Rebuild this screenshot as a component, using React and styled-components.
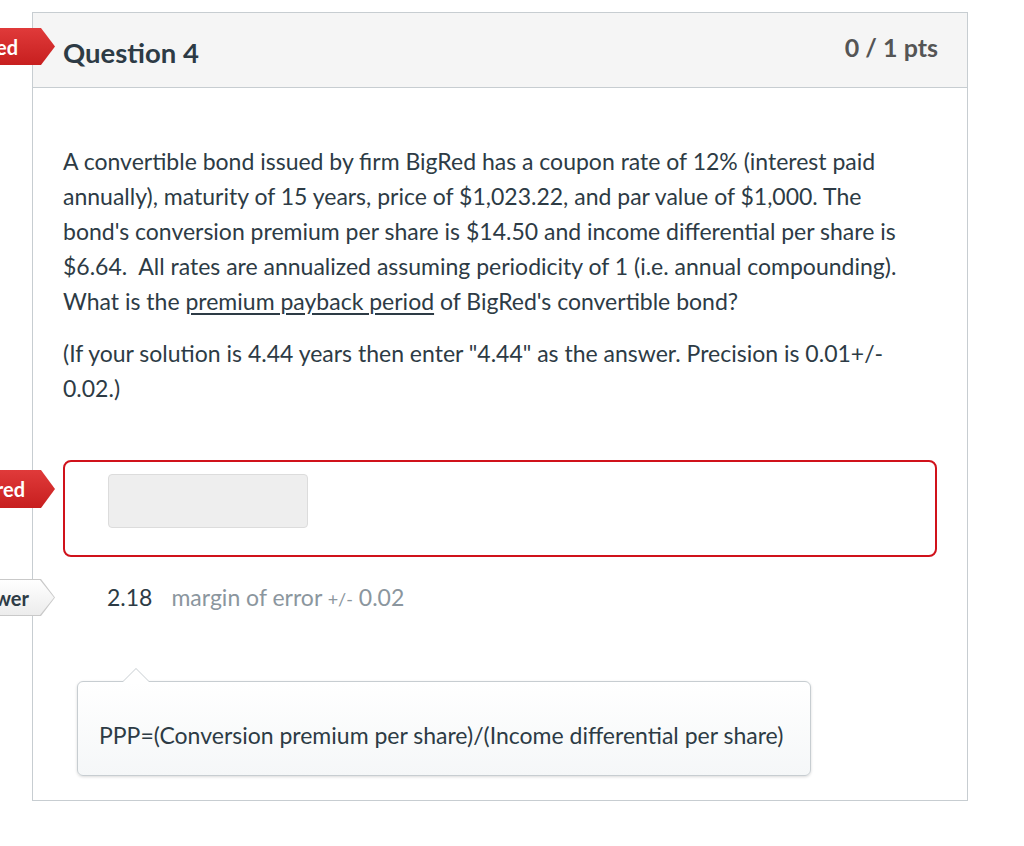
import styled, { createGlobalStyle } from "styled-components"

const GlobalStyle = createGlobalStyle`
  body {
    margin: 0;
    background: #fff;
    font-family: Lato, "Open Sans", sans-serif;
    color: #2d3b45;
  }
`

const Page = styled.div`
  position: relative;
  padding: 12px 0 40px 32px;
`

const Card = styled.div`
  width: 934px;
  border: 1px solid #c7cdd1;
  background: #fff;
`

const Header = styled.div`
  display: flex;
  justify-content: space-between;
  align-items: center;
  height: 74px;
  padding: 0 29px 0 30px;
  background: #f5f5f5;
  border-bottom: 1px solid #c7cdd1;
`

const Title = styled.h2`
  margin: 5px 0 0;
  font-size: 27.5px;
  font-weight: 700;
  color: #2d3b45;
`

const Points = styled.div`
  font-size: 25px;
  font-weight: 700;
  color: #555;
  margin-bottom: 6px;
`

const Body = styled.div`
  padding: 56px 30px 24px 30px;
`

const Para = styled.p`
  max-width: 870px;
  margin: 0 0 17px;
  font-size: 23px;
  line-height: 35px;
  color: #2d3b45;
`

const Term = styled.span`
  text-decoration: underline;
  text-underline-offset: 3px;
`

const AnswerBox = styled.div`
  margin-top: 54px;
  height: 97px;
  border: 2px solid #d0121b;
  border-radius: 8px;
  padding: 12px 0 0 43px;
  box-sizing: border-box;
`

const Input = styled.div`
  width: 198px;
  height: 52px;
  background: #eeeeee;
  border: 1px solid #dcdcdc;
  border-radius: 4px;
`

const Correct = styled.div`
  display: flex;
  align-items: baseline;
  gap: 19px;
  margin: 26px 0 0 44px;
  font-size: 23px;
`

const Value = styled.span`
  color: #2d3b45;
`

const Margin = styled.span`
  color: #8b969e;
  small {
    font-size: 18px;
  }
`

const Comment = styled.div`
  position: relative;
  margin: 70px 0 0 14px;
  width: 734px;
  height: 95px;
  box-sizing: border-box;
  padding: 12px 21px 0;
  display: flex;
  align-items: center;
  border: 1px solid #c7cdd1;
  border-radius: 6px;
  background: linear-gradient(#ffffff, #f5f7f8);
  box-shadow: 0 1px 3px rgba(0, 0, 0, 0.15);
  font-size: 23px;
  color: #2d3b45;

  &::before,
  &::after {
    content: "";
    position: absolute;
    left: 44px;
    width: 0;
    height: 0;
    border-left: 14px solid transparent;
    border-right: 14px solid transparent;
  }
  &::before {
    top: -14px;
    border-bottom: 14px solid #c7cdd1;
  }
  &::after {
    top: -13px;
    border-bottom: 14px solid #fff;
  }
`

const Tag = styled.div`
  position: absolute;
  left: -60px;
  top: ${(p) => p.$top}px;
  height: ${(p) => p.$h}px;
  width: 115px;
  box-sizing: border-box;
  display: flex;
  align-items: center;
  justify-content: flex-end;
  font-size: 20px;
  font-weight: 700;
  clip-path: polygon(0 0, calc(100% - 14px) 0, 100% 50%, calc(100% - 14px) 100%, 0 100%);
  color: ${(p) => (p.$red ? "#fff" : "#2d3b45")};
  background: ${(p) =>
    p.$red ? "linear-gradient(#e03a3a, #c71f1f)" : "linear-gradient(#ffffff, #eaeaea)"};
  padding-right: ${(p) => p.$pr}px;
`

const GhostTag = styled(Tag)`
  background: #c9c9c9;
  &::after {
    content: "";
    position: absolute;
    inset: 1px;
    clip-path: polygon(0 0, calc(100% - 14px) 0, 100% 50%, calc(100% - 14px) 100%, 0 100%);
    background: linear-gradient(#ffffff, #ececec);
  }
  span {
    position: relative;
    z-index: 1;
  }
`

export default function App() {
  return (
    <>
      <GlobalStyle />
      <Page>
        <Tag $red $top={28} $h={37} $pr={37}>ed</Tag>
        <Tag $red $top={470} $h={38} $pr={30}>red</Tag>
        <GhostTag $top={579} $h={37} $pr={26}><span>wer</span></GhostTag>
        <Card>
          <Header>
            <Title>Question 4</Title>
            <Points>0 / 1 pts</Points>
          </Header>
          <Body>
            <Para>
              A convertible bond issued by firm BigRed has a coupon rate of 12% (interest paid
              annually), maturity of 15 years, price of $1,023.22, and par value of $1,000. The
              bond's conversion premium per share is $14.50 and income differential per share is
              $6.64.&nbsp; All rates are annualized assuming periodicity of 1 (i.e. annual compounding).
              What is the <Term>premium payback period</Term> of BigRed's convertible bond?
            </Para>
            <Para>
              (If your solution is 4.44 years then enter "4.44" as the answer. Precision is 0.01+/-
              0.02.)
            </Para>
            <AnswerBox>
              <Input />
            </AnswerBox>
            <Correct>
              <Value>2.18</Value>
              <Margin>
                margin of error <small>+/-</small> 0.02
              </Margin>
            </Correct>
            <Comment>PPP=(Conversion premium per share)/(Income differential per share)</Comment>
          </Body>
        </Card>
      </Page>
    </>
  )
}
